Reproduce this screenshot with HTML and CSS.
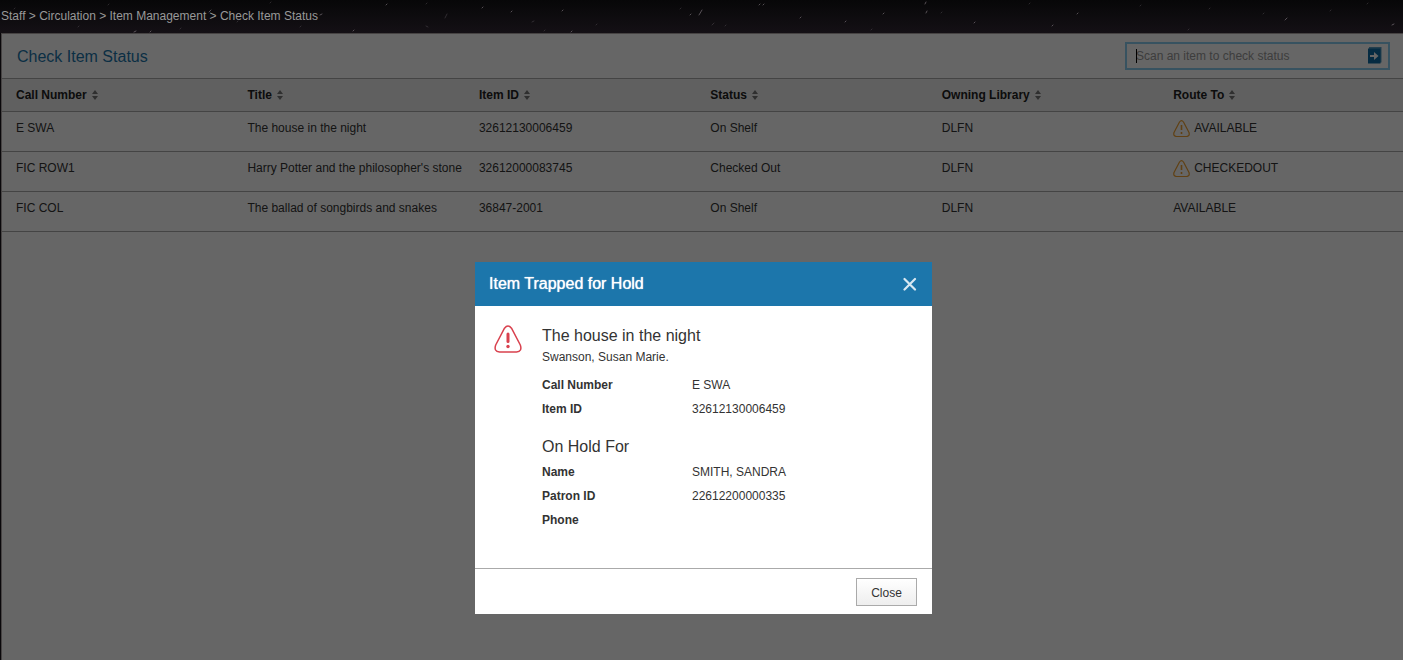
FILE: index.html
```html
<!DOCTYPE html>
<html lang="en">
<head>
<meta charset="utf-8">
<title>Check Item Status</title>
<link rel="stylesheet" href="styles.css">
</head>
<body>
<svg class="sprite" aria-hidden="true">
  <symbol id="sort" viewBox="0 0 6 10"><path d="M3 0 6 4H0zM3 10 0 6h6z" fill="#777"/></symbol>
  <symbol id="warn" viewBox="0 0 28 28"><path d="M10.500 3.200Q14-1.200 17.500 3.200L26.300 20Q28.500 26.500 22.500 27H5.500Q-.5 26.500 1.700 20Z" fill="none" stroke="currentColor" stroke-width="1.500" stroke-linejoin="round"/><path d="M14 9v7.500" stroke="currentColor" stroke-width="3" stroke-linecap="round"/><circle cx="14" cy="21.500" r="1.700" fill="currentColor"/></symbol>
  <symbol id="warn-small" viewBox="0 0 17 17"><path d="M6.500 2Q8.500-.6 10.500 2L16 12.500Q17 16.200 13.500 16.500H3.500Q0 16.200 1 12.500Z" fill="none" stroke="currentColor" stroke-width="1.200" stroke-linejoin="round"/><path d="M8.500 5v5M8.500 12v2" stroke="currentColor" stroke-width="1.600"/></symbol>
</svg>
<header class="topbar">
  <svg class="stars" width="1403" height="33" aria-hidden="true">
    <g stroke="#8a8088" stroke-width="1" stroke-linecap="round" opacity=".6">
      <path d="M482 8l1-1M511 12l1-1M562 11l1-1M571 32l1-1M690 15l1-1M699 15l3-5M759 5l1-1M763 5l1-1M800 18l1-1M845 22l1-1M883 14l1-1M925 4l1-2M926 13l1-2M1285 20l2-2M1052 26l1-1M1077 14l1-1M974 23l1-1M386 5l1-1M320 15l2-1M209 12l2-2M353 31l1-1M134 32l2-1M150 32l1-1M1392 25l2-1"/>
    </g>
    <g stroke="#645c64" stroke-width="1" stroke-linecap="round" opacity=".4">
      <path d="M14 9l1-1M78 27l1-1M108 5l1-1M180 29l1-1M237 22l1-1M270 3l1-1M300 27l1-1M426 4l1-1M445 18l2-4M532 22l2-1M426 26l2 1M544 31l1-1M596 25l1-1M680 9l1-1M712 25l2-2M725 26l1-1M871 30l1-1M941 13l1-1M1029 4l1-1M1140 6l1-1M1188 30l1-1M1209 9l1-1M1263 14l1-1M1330 11l1-1M1367 4l1-1"/>
    </g>
  </svg>
  <nav class="crumbs" aria-label="Breadcrumb">Staff &gt; Circulation &gt; Item Management &gt; Check Item Status</nav>
</header>
<main class="panel">
  <div class="panel-head">
    <h1 class="panel-title">Check Item Status</h1>
    <form class="scan">
      <input class="scan-input" type="text" aria-label="Scan an item to check status" placeholder="Scan an item to check status">
      <span class="caret"></span>
      <button class="scan-go" type="button" aria-label="Check status"><svg width="14" height="17" viewBox="0 0 14 17"><path d="M1 0h12.500v15.500H1z" fill="#5a9fc4"/><path d="M0 1.500h12.500v15H0z" fill="#0d6da6"/><path d="M2 8h4V5l4.500 4L6 13v-3H2z" fill="#fff"/></svg></button>
    </form>
  </div>
  <table class="items">
    <colgroup><col class="col" span="5"><col></colgroup>
    <thead><tr>
      <th>Call Number<svg class="sort"><use href="#sort"/></svg></th>
      <th>Title<svg class="sort"><use href="#sort"/></svg></th>
      <th>Item ID<svg class="sort"><use href="#sort"/></svg></th>
      <th>Status<svg class="sort"><use href="#sort"/></svg></th>
      <th>Owning Library<svg class="sort"><use href="#sort"/></svg></th>
      <th>Route To<svg class="sort"><use href="#sort"/></svg></th>
    </tr></thead>
    <tbody>
      <tr><td>E SWA</td><td>The house in the night</td><td>32612130006459</td><td>On Shelf</td><td>DLFN</td><td><svg class="row-warn"><use href="#warn-small"/></svg>AVAILABLE</td></tr>
      <tr><td>FIC ROW1</td><td>Harry Potter and the philosopher's stone</td><td>32612000083745</td><td>Checked Out</td><td>DLFN</td><td><svg class="row-warn"><use href="#warn-small"/></svg>CHECKEDOUT</td></tr>
      <tr><td>FIC COL</td><td>The ballad of songbirds and snakes</td><td>36847-2001</td><td>On Shelf</td><td>DLFN</td><td>AVAILABLE</td></tr>
    </tbody>
  </table>
</main>
<div class="overlay">
  <section class="dialog" role="dialog" aria-modal="true" aria-labelledby="dialog-title">
    <div class="dialog-head">
      <h2 class="dialog-title" id="dialog-title">Item Trapped for Hold</h2>
      <button class="dialog-x" type="button" aria-label="Close dialog"><svg width="14" height="14" viewBox="0 0 14 14"><path d="M1.500 2l10.500 10.500M12 2l-10.500 10.500" stroke="#d8e8f2" stroke-width="2.200" stroke-linecap="round"/></svg></button>
    </div>
    <div class="dialog-body">
      <svg class="alert"><use href="#warn"/></svg>
      <div class="details">
        <h3 class="heading">The house in the night</h3>
        <p class="author">Swanson, Susan Marie.</p>
        <dl class="facts">
          <dt>Call Number</dt><dd>E SWA</dd>
          <dt>Item ID</dt><dd>32612130006459</dd>
        </dl>
        <h3 class="heading hold">On Hold For</h3>
        <dl class="facts">
          <dt>Name</dt><dd>SMITH, SANDRA</dd>
          <dt>Patron ID</dt><dd>22612200000335</dd>
          <dt>Phone</dt><dd></dd>
        </dl>
      </div>
    </div>
    <div class="dialog-foot"><button class="close" type="button">Close</button></div>
  </section>
</div>
</body>
</html>
```
FILE: styles.css
```css
* { box-sizing: border-box; }
body {
  margin: 0;
  min-height: 100vh;
  display: flex;
  flex-direction: column;
  background: #181319;
  color: #333;
  font: 12px/16px "Liberation Sans", Arial, sans-serif;
}
h1, h2, h3, p, dl, dd { margin: 0; font-weight: normal; }
button { padding: 0; border: 0; background: none; font: inherit; }
.sprite { position: absolute; width: 0; height: 0; }

.topbar {
  position: relative;
  z-index: 2;
  height: 33px;
  padding: 8px 0 0 1px;
  overflow: hidden;
  background: linear-gradient(#070708, #141015);
}
.stars { position: absolute; top: 0; left: 0; }
.crumbs { position: relative; color: #999; }

.panel {
  flex: 1;
  margin-left: 1px;
  border-top: 1px solid #b0a8a8;
  border-left: 1px solid #b0a8a8;
  background: #fff;
}
.panel-head {
  display: flex;
  align-items: center;
  justify-content: space-between;
  height: 44px;
  padding: 0 13px 0 15px;
}
.panel-title { padding-top: 2px; color: #1c76ab; font-size: 16px; line-height: 20px; }
.scan { position: relative; width: 265px; }
.scan-input {
  display: block;
  width: 100%;
  height: 28px;
  padding: 0 32px 0 9px;
  border: 2px solid #8accf0;
  outline: 0;
  background: #fff;
  color: #333;
  font: inherit;
}
.scan-input::placeholder { color: #999; opacity: 1; }
.caret { position: absolute; top: 7px; left: 11px; width: 1px; height: 14px; background: #000; }
.scan-go { position: absolute; top: 5px; right: 8px; }
.scan-go svg { display: block; }

.items { width: 100%; border-collapse: collapse; table-layout: fixed; }
.col { width: 16.52%; }
.items th, .items td {
  padding: 0 0 0 14px;
  text-align: left;
  white-space: nowrap;
  border-bottom: 1px solid #aaa;
}
.items th { height: 33px; border-top: 1px solid #aaa; background: #f0f0f0; color: #222; }
.items td { height: 40px; padding-bottom: 8px; }
.sort { width: 6px; height: 10px; margin-left: 5px; vertical-align: -1px; }
.row-warn { width: 17px; height: 17px; margin-right: 4px; vertical-align: -5px; color: #f0a030; }
.items td:has(.row-warn) { padding-bottom: 6px; line-height: 14px; }

.overlay {
  position: fixed;
  inset: 0;
  z-index: 1;
  display: flex;
  align-items: flex-start;
  justify-content: center;
  padding: 262px 0 0 4px;
  background: rgba(0, 0, 0, .6);
}
.dialog { width: 457px; background: #fff; }
.dialog-head {
  display: flex;
  align-items: center;
  justify-content: space-between;
  height: 44px;
  padding: 0 15px 0 14px;
  background: #1c76ab;
}
.dialog-title { color: #fff; font-size: 16px; line-height: 20px; text-shadow: 0 0 1px #fff; }
.dialog-x svg { display: block; }
.dialog-body { display: flex; gap: 20px; height: 262px; padding: 19px 20px 0 19px; }
.alert { width: 28px; height: 28px; color: #d9414e; }
.details { padding-top: 1px; }
.heading { font-size: 16px; line-height: 20px; }
.author { margin-top: 3px; }
.facts {
  display: grid;
  grid-template-columns: 150px 1fr;
  row-gap: 8px;
  margin-top: 12px;
}
.facts dt { font-weight: bold; }
.hold { margin-top: 20px; }
.hold + .facts { margin-top: 7px; }
.dialog-foot {
  display: flex;
  justify-content: flex-end;
  padding: 9px 15px 8px;
  border-top: 1px solid #aaa;
}
.close {
  width: 61px;
  height: 28px;
  padding-top: 1px;
  border: 1px solid #aaa;
  background: linear-gradient(#fff, #eee);
  color: #333;
}
```
